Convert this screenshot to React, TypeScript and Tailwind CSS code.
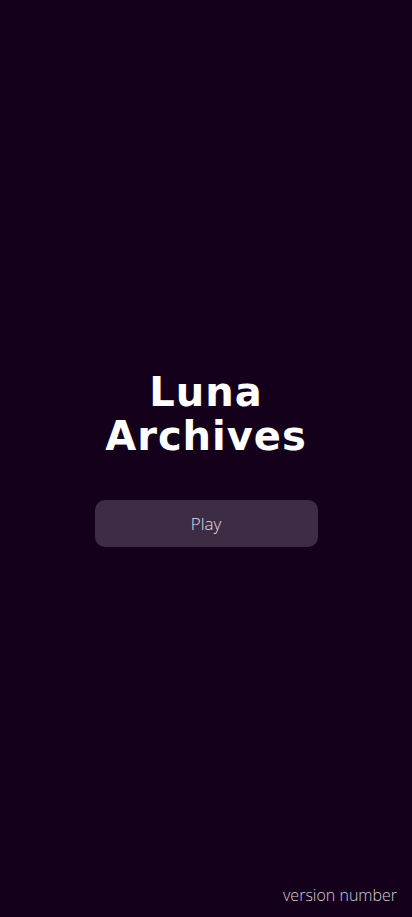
export default function App() {
  return (
    <div className="relative flex h-[917px] w-full flex-col items-center justify-center bg-[#14001a] font-['Open_Sans',sans-serif] text-white">
      <div className="flex flex-col items-center">
        <h1 className="text-center font-['DejaVu_Sans',sans-serif] text-[40px] font-bold leading-[44px] tracking-[1px]">
          Luna
          <br />
          Archives
        </h1>
        <button
          type="button"
          className="mt-[42px] h-[47px] w-[223px] rounded-[10px] bg-[#3d2c44] text-[17px] font-light text-[#e4dde6]"
        >
          Play
        </button>
      </div>
      <div className="absolute right-[15px] bottom-[10px] text-[16px] font-light text-[#d6cfd9]">
        version number
      </div>
    </div>
  );
}
